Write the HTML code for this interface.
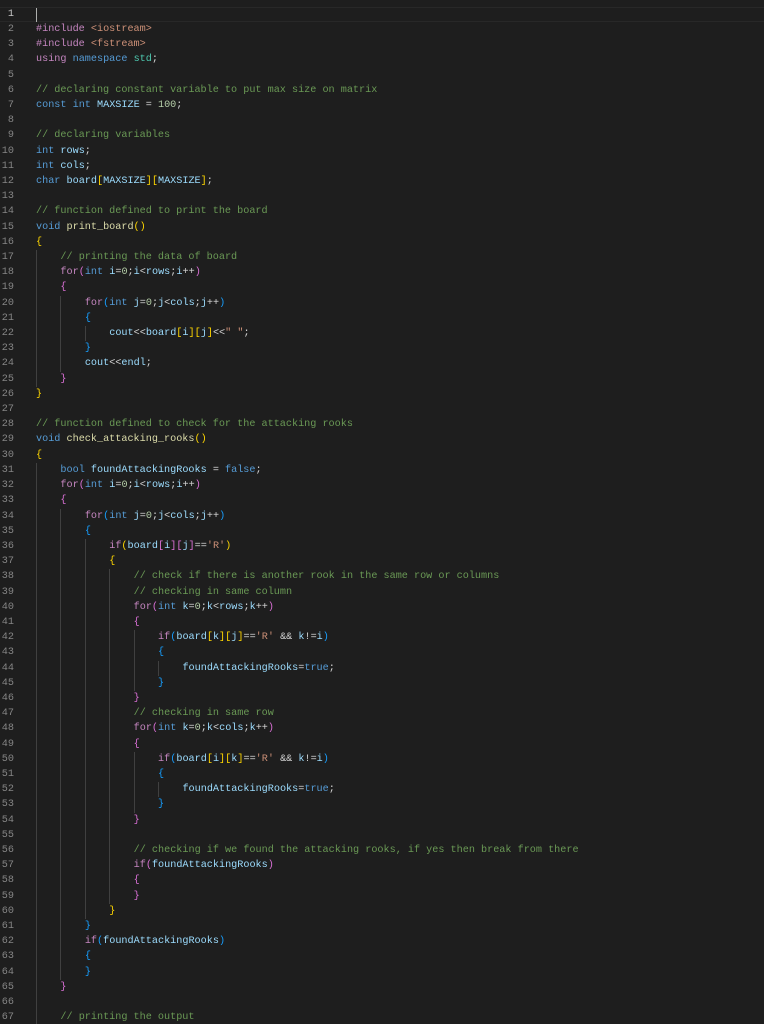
<!DOCTYPE html>
<html><head><meta charset="utf-8"><style>
html,body{margin:0;padding:0;background:#1e1e1e;width:764px;height:1024px;overflow:hidden}
#ed{position:relative;padding-top:6.8px;font-family:"Liberation Mono",monospace;font-size:10.17px;color:#d4d4d4}
.l{height:15.21px;line-height:15.21px;white-space:pre;position:relative}
.n{position:absolute;left:0;width:14px;text-align:right;color:#858585}
.x{position:absolute;left:36px}
.l1{border-top:1px solid #282828;border-bottom:1px solid #282828;box-sizing:border-box;line-height:13.2px}
.l1 .n{color:#c6c6c6}
.i{display:inline-block;width:24.42px;height:15.21px;vertical-align:top;box-shadow:inset 1px 0 0 #404040}
.k{color:#c586c0}.t{color:#569cd6}.v{color:#9cdcfe}.f{color:#dcdcaa}.s{color:#ce9178}.nm{color:#b5cea8}.c{color:#6a9955}.y{color:#ffd700}.p{color:#da70d6}.b{color:#179fff}.ns{color:#4ec9b0}
.cur{display:inline-block;width:1px;height:14px;background:#aeafad;vertical-align:top}
</style></head><body><div id="ed">
<div class="l l1"><span class="n">1</span><span class="x"><span class="cur"></span></span></div>
<div class="l"><span class="n">2</span><span class="x"><span class="k">#include</span> <span class="s">&lt;iostream&gt;</span></span></div>
<div class="l"><span class="n">3</span><span class="x"><span class="k">#include</span> <span class="s">&lt;fstream&gt;</span></span></div>
<div class="l"><span class="n">4</span><span class="x"><span class="k">using</span> <span class="t">namespace</span> <span class="ns">std</span>;</span></div>
<div class="l"><span class="n">5</span></div>
<div class="l"><span class="n">6</span><span class="x c">// declaring constant variable to put max size on matrix</span></div>
<div class="l"><span class="n">7</span><span class="x"><span class="t">const</span> <span class="t">int</span> <span class="v">MAXSIZE</span> = <span class="nm">100</span>;</span></div>
<div class="l"><span class="n">8</span></div>
<div class="l"><span class="n">9</span><span class="x c">// declaring variables</span></div>
<div class="l"><span class="n">10</span><span class="x"><span class="t">int</span> <span class="v">rows</span>;</span></div>
<div class="l"><span class="n">11</span><span class="x"><span class="t">int</span> <span class="v">cols</span>;</span></div>
<div class="l"><span class="n">12</span><span class="x"><span class="t">char</span> <span class="v">board</span><span class="y">[</span><span class="v">MAXSIZE</span><span class="y">][</span><span class="v">MAXSIZE</span><span class="y">]</span>;</span></div>
<div class="l"><span class="n">13</span></div>
<div class="l"><span class="n">14</span><span class="x c">// function defined to print the board</span></div>
<div class="l"><span class="n">15</span><span class="x"><span class="t">void</span> <span class="f">print_board</span><span class="y">()</span></span></div>
<div class="l"><span class="n">16</span><span class="x y">{</span></div>
<div class="l"><span class="n">17</span><span class="x"><span class="i"></span><span class="c">// printing the data of board</span></span></div>
<div class="l"><span class="n">18</span><span class="x"><span class="i"></span><span class="k">for</span><span class="p">(</span><span class="t">int</span> <span class="v">i</span>=<span class="nm">0</span>;<span class="v">i</span>&lt;<span class="v">rows</span>;<span class="v">i</span>++<span class="p">)</span></span></div>
<div class="l"><span class="n">19</span><span class="x"><span class="i"></span><span class="p">{</span></span></div>
<div class="l"><span class="n">20</span><span class="x"><span class="i"></span><span class="i"></span><span class="k">for</span><span class="b">(</span><span class="t">int</span> <span class="v">j</span>=<span class="nm">0</span>;<span class="v">j</span>&lt;<span class="v">cols</span>;<span class="v">j</span>++<span class="b">)</span></span></div>
<div class="l"><span class="n">21</span><span class="x"><span class="i"></span><span class="i"></span><span class="b">{</span></span></div>
<div class="l"><span class="n">22</span><span class="x"><span class="i"></span><span class="i"></span><span class="i"></span><span class="v">cout</span>&lt;&lt;<span class="v">board</span><span class="y">[</span><span class="v">i</span><span class="y">][</span><span class="v">j</span><span class="y">]</span>&lt;&lt;<span class="s">" "</span>;</span></div>
<div class="l"><span class="n">23</span><span class="x"><span class="i"></span><span class="i"></span><span class="b">}</span></span></div>
<div class="l"><span class="n">24</span><span class="x"><span class="i"></span><span class="i"></span><span class="v">cout</span>&lt;&lt;<span class="v">endl</span>;</span></div>
<div class="l"><span class="n">25</span><span class="x"><span class="i"></span><span class="p">}</span></span></div>
<div class="l"><span class="n">26</span><span class="x y">}</span></div>
<div class="l"><span class="n">27</span></div>
<div class="l"><span class="n">28</span><span class="x c">// function defined to check for the attacking rooks</span></div>
<div class="l"><span class="n">29</span><span class="x"><span class="t">void</span> <span class="f">check_attacking_rooks</span><span class="y">()</span></span></div>
<div class="l"><span class="n">30</span><span class="x y">{</span></div>
<div class="l"><span class="n">31</span><span class="x"><span class="i"></span><span class="t">bool</span> <span class="v">foundAttackingRooks</span> = <span class="t">false</span>;</span></div>
<div class="l"><span class="n">32</span><span class="x"><span class="i"></span><span class="k">for</span><span class="p">(</span><span class="t">int</span> <span class="v">i</span>=<span class="nm">0</span>;<span class="v">i</span>&lt;<span class="v">rows</span>;<span class="v">i</span>++<span class="p">)</span></span></div>
<div class="l"><span class="n">33</span><span class="x"><span class="i"></span><span class="p">{</span></span></div>
<div class="l"><span class="n">34</span><span class="x"><span class="i"></span><span class="i"></span><span class="k">for</span><span class="b">(</span><span class="t">int</span> <span class="v">j</span>=<span class="nm">0</span>;<span class="v">j</span>&lt;<span class="v">cols</span>;<span class="v">j</span>++<span class="b">)</span></span></div>
<div class="l"><span class="n">35</span><span class="x"><span class="i"></span><span class="i"></span><span class="b">{</span></span></div>
<div class="l"><span class="n">36</span><span class="x"><span class="i"></span><span class="i"></span><span class="i"></span><span class="k">if</span><span class="y">(</span><span class="v">board</span><span class="p">[</span><span class="v">i</span><span class="p">][</span><span class="v">j</span><span class="p">]</span>==<span class="s">'R'</span><span class="y">)</span></span></div>
<div class="l"><span class="n">37</span><span class="x"><span class="i"></span><span class="i"></span><span class="i"></span><span class="y">{</span></span></div>
<div class="l"><span class="n">38</span><span class="x"><span class="i"></span><span class="i"></span><span class="i"></span><span class="i"></span><span class="c">// check if there is another rook in the same row or columns</span></span></div>
<div class="l"><span class="n">39</span><span class="x"><span class="i"></span><span class="i"></span><span class="i"></span><span class="i"></span><span class="c">// checking in same column</span></span></div>
<div class="l"><span class="n">40</span><span class="x"><span class="i"></span><span class="i"></span><span class="i"></span><span class="i"></span><span class="k">for</span><span class="p">(</span><span class="t">int</span> <span class="v">k</span>=<span class="nm">0</span>;<span class="v">k</span>&lt;<span class="v">rows</span>;<span class="v">k</span>++<span class="p">)</span></span></div>
<div class="l"><span class="n">41</span><span class="x"><span class="i"></span><span class="i"></span><span class="i"></span><span class="i"></span><span class="p">{</span></span></div>
<div class="l"><span class="n">42</span><span class="x"><span class="i"></span><span class="i"></span><span class="i"></span><span class="i"></span><span class="i"></span><span class="k">if</span><span class="b">(</span><span class="v">board</span><span class="y">[</span><span class="v">k</span><span class="y">][</span><span class="v">j</span><span class="y">]</span>==<span class="s">'R'</span> &amp;&amp; <span class="v">k</span>!=<span class="v">i</span><span class="b">)</span></span></div>
<div class="l"><span class="n">43</span><span class="x"><span class="i"></span><span class="i"></span><span class="i"></span><span class="i"></span><span class="i"></span><span class="b">{</span></span></div>
<div class="l"><span class="n">44</span><span class="x"><span class="i"></span><span class="i"></span><span class="i"></span><span class="i"></span><span class="i"></span><span class="i"></span><span class="v">foundAttackingRooks</span>=<span class="t">true</span>;</span></div>
<div class="l"><span class="n">45</span><span class="x"><span class="i"></span><span class="i"></span><span class="i"></span><span class="i"></span><span class="i"></span><span class="b">}</span></span></div>
<div class="l"><span class="n">46</span><span class="x"><span class="i"></span><span class="i"></span><span class="i"></span><span class="i"></span><span class="p">}</span></span></div>
<div class="l"><span class="n">47</span><span class="x"><span class="i"></span><span class="i"></span><span class="i"></span><span class="i"></span><span class="c">// checking in same row</span></span></div>
<div class="l"><span class="n">48</span><span class="x"><span class="i"></span><span class="i"></span><span class="i"></span><span class="i"></span><span class="k">for</span><span class="p">(</span><span class="t">int</span> <span class="v">k</span>=<span class="nm">0</span>;<span class="v">k</span>&lt;<span class="v">cols</span>;<span class="v">k</span>++<span class="p">)</span></span></div>
<div class="l"><span class="n">49</span><span class="x"><span class="i"></span><span class="i"></span><span class="i"></span><span class="i"></span><span class="p">{</span></span></div>
<div class="l"><span class="n">50</span><span class="x"><span class="i"></span><span class="i"></span><span class="i"></span><span class="i"></span><span class="i"></span><span class="k">if</span><span class="b">(</span><span class="v">board</span><span class="y">[</span><span class="v">i</span><span class="y">][</span><span class="v">k</span><span class="y">]</span>==<span class="s">'R'</span> &amp;&amp; <span class="v">k</span>!=<span class="v">i</span><span class="b">)</span></span></div>
<div class="l"><span class="n">51</span><span class="x"><span class="i"></span><span class="i"></span><span class="i"></span><span class="i"></span><span class="i"></span><span class="b">{</span></span></div>
<div class="l"><span class="n">52</span><span class="x"><span class="i"></span><span class="i"></span><span class="i"></span><span class="i"></span><span class="i"></span><span class="i"></span><span class="v">foundAttackingRooks</span>=<span class="t">true</span>;</span></div>
<div class="l"><span class="n">53</span><span class="x"><span class="i"></span><span class="i"></span><span class="i"></span><span class="i"></span><span class="i"></span><span class="b">}</span></span></div>
<div class="l"><span class="n">54</span><span class="x"><span class="i"></span><span class="i"></span><span class="i"></span><span class="i"></span><span class="p">}</span></span></div>
<div class="l"><span class="n">55</span><span class="x"><span class="i"></span><span class="i"></span><span class="i"></span><span class="i"></span></span></div>
<div class="l"><span class="n">56</span><span class="x"><span class="i"></span><span class="i"></span><span class="i"></span><span class="i"></span><span class="c">// checking if we found the attacking rooks, if yes then break from there</span></span></div>
<div class="l"><span class="n">57</span><span class="x"><span class="i"></span><span class="i"></span><span class="i"></span><span class="i"></span><span class="k">if</span><span class="p">(</span><span class="v">foundAttackingRooks</span><span class="p">)</span></span></div>
<div class="l"><span class="n">58</span><span class="x"><span class="i"></span><span class="i"></span><span class="i"></span><span class="i"></span><span class="p">{</span></span></div>
<div class="l"><span class="n">59</span><span class="x"><span class="i"></span><span class="i"></span><span class="i"></span><span class="i"></span><span class="p">}</span></span></div>
<div class="l"><span class="n">60</span><span class="x"><span class="i"></span><span class="i"></span><span class="i"></span><span class="y">}</span></span></div>
<div class="l"><span class="n">61</span><span class="x"><span class="i"></span><span class="i"></span><span class="b">}</span></span></div>
<div class="l"><span class="n">62</span><span class="x"><span class="i"></span><span class="i"></span><span class="k">if</span><span class="b">(</span><span class="v">foundAttackingRooks</span><span class="b">)</span></span></div>
<div class="l"><span class="n">63</span><span class="x"><span class="i"></span><span class="i"></span><span class="b">{</span></span></div>
<div class="l"><span class="n">64</span><span class="x"><span class="i"></span><span class="i"></span><span class="b">}</span></span></div>
<div class="l"><span class="n">65</span><span class="x"><span class="i"></span><span class="p">}</span></span></div>
<div class="l"><span class="n">66</span><span class="x"><span class="i"></span></span></div>
<div class="l"><span class="n">67</span><span class="x"><span class="i"></span><span class="c">// printing the output</span></span></div>
</div></body></html>
